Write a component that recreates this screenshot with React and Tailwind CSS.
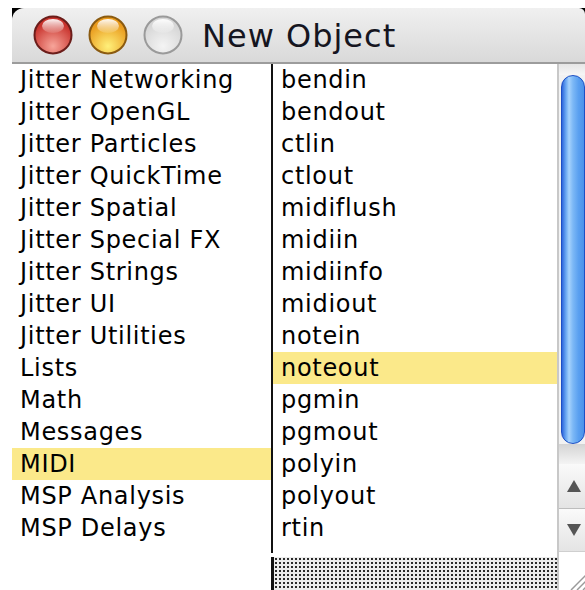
import React from 'react';

const groups = [
    'Jitter Networking',
    'Jitter OpenGL',
    'Jitter Particles',
    'Jitter QuickTime',
    'Jitter Spatial',
    'Jitter Special FX',
    'Jitter Strings',
    'Jitter UI',
    'Jitter Utilities',
    'Lists',
    'Math',
    'Messages',
    'MIDI',
    'MSP Analysis',
    'MSP Delays',
];

const objects = [
    'bendin',
    'bendout',
    'ctlin',
    'ctlout',
    'midiflush',
    'midiin',
    'midiinfo',
    'midiout',
    'notein',
    'noteout',
    'pgmin',
    'pgmout',
    'polyin',
    'polyout',
    'rtin',
];

// glossy aqua window button
function WindowButton({ id, rim, base, glow }) {
    return (
        <svg width="40" height="40" viewBox="0 0 40 40">
            <defs>
                <radialGradient id={`${id}-fill`} cx="50%" cy="80%" r="65%">
                    <stop offset="0%" stopColor={glow} />
                    <stop offset="100%" stopColor={base} />
                </radialGradient>
                <linearGradient id={`${id}-shine`} x1="0" y1="0" x2="0" y2="1">
                    <stop offset="0%" stopColor="#ffffff" stopOpacity="0.95" />
                    <stop offset="100%" stopColor="#ffffff" stopOpacity="0.1" />
                </linearGradient>
            </defs>
            <circle cx="20" cy="20" r="18.5" fill={`url(#${id}-fill)`} stroke={rim} strokeWidth="2" />
            <ellipse cx="20" cy="11" rx="11" ry="7" fill={`url(#${id}-shine)`} />
        </svg>
    );
}

function ListRow({ label, selected }) {
    return (
        <div
            className={`h-[32px] flex items-center pl-[8px] text-[24px] tracking-[0.7px] text-black whitespace-nowrap ${
                selected ? 'bg-[#fbe98a]' : ''
            }`}
        >
            {label}
        </div>
    );
}

function ScrollBar() {
    return (
        <div className="w-[28px] flex flex-col border-l-2 border-[#c8c8c8] bg-[#f2f2f2]">
            <div className="h-[11px] bg-[linear-gradient(180deg,#e6e6e6,#f6f6f6)]" />
            {/* thumb */}
            <div className="ml-[2px] h-[372px] rounded-[14px] border border-[#1d4fc4] bg-[linear-gradient(90deg,#2d66dc_0%,#6aa8f2_18%,#a6d2fc_32%,#7cb8f6_50%,#5aa0f0_75%,#4b92ea_100%)]" />
            <div className="h-[20px] bg-[linear-gradient(180deg,#d4d4d4,#f4f4f4)]" />
            <div className="h-[46px] flex items-center justify-center border-b border-[#bdbdbd] bg-[linear-gradient(180deg,#fafafa,#e4e4e4)]">
                <svg width="16" height="14" viewBox="0 0 16 14" className="ml-[4px]">
                    <polygon points="8,1 15,13 1,13" fill="#555" />
                </svg>
            </div>
            <div className="h-[42px] flex items-center justify-center bg-[linear-gradient(180deg,#fafafa,#e4e4e4)]">
                <svg width="16" height="14" viewBox="0 0 16 14" className="ml-[4px]">
                    <polygon points="1,1 15,1 8,13" fill="#555" />
                </svg>
            </div>
            <div className="flex-1 bg-white border-t border-[#cfcfcf]">
                <svg width="28" height="38" viewBox="0 0 28 38">
                    <line x1="12" y1="38" x2="28" y2="22" stroke="#9a9a9a" strokeWidth="1.5" />
                    <line x1="18" y1="38" x2="28" y2="28" stroke="#9a9a9a" strokeWidth="1.5" />
                    <line x1="24" y1="38" x2="28" y2="34" stroke="#9a9a9a" strokeWidth="1.5" />
                </svg>
            </div>
        </div>
    );
}

export default function App() {
    return (
        <div
            className="w-[585px] h-[590px] bg-white overflow-hidden"
            style={{ fontFamily: '"DejaVu Sans", Verdana, sans-serif' }}
        >
            <div className="pt-[8px] pl-[12px] h-full flex flex-col">
                {/* title bar */}
                <div className="bg-[linear-gradient(180deg,#000_0,#000_14px,transparent_14px)]">
                    <div className="h-[56px] rounded-tl-[12px] rounded-tr-[6px] flex items-center gap-[15px] pl-[21px] border-b-2 border-[#9c9c9c] bg-[linear-gradient(180deg,#f0f0f0,#d9d9d9)]">
                        <WindowButton id="close" rim="#6b1d1a" base="#c8322c" glow="#f7a59a" />
                        <WindowButton id="min" rim="#8a5a10" base="#e99a1c" glow="#fff07a" />
                        <WindowButton id="zoom" rim="#9a9a9a" base="#d6d6d6" glow="#f4f4f4" />
                        <span className="ml-[4px] text-[32px] tracking-[1px] text-[#15151f] leading-none pt-[2px]">
                            New Object
                        </span>
                    </div>
                </div>

                {/* browser panes */}
                <div className="flex flex-1 min-h-0">
                    <div className="w-[259px]">
                        {groups.map(g => (
                            <ListRow key={g} label={g} selected={g === 'MIDI'} />
                        ))}
                    </div>

                    <div className="flex-1 flex flex-col">
                        <div className="h-[489px] border-l-2 border-[#111]">
                            {objects.map(o => (
                                <ListRow key={o} label={o} selected={o === 'noteout'} />
                            ))}
                        </div>
                        <div className="mt-[4px] flex-1 border-l-[3px] border-[#111] bg-[#ececec] bg-[radial-gradient(circle,#2a2a2a_1px,transparent_1.4px)] bg-[length:4px_4px]" />
                    </div>

                    <ScrollBar />
                </div>
            </div>
        </div>
    );
}
